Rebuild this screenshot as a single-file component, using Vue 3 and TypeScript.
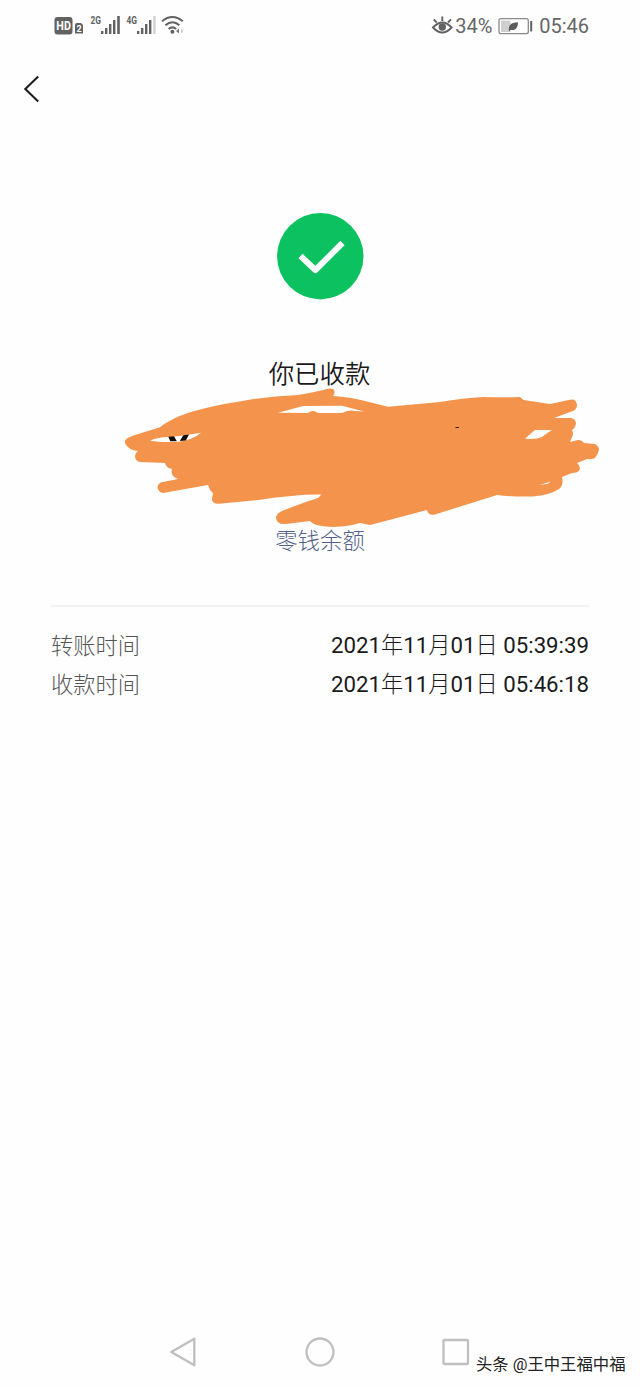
<script setup lang="ts">
interface TimeRow {
  label: string
  value: string
}

interface TextPart {
  text: string
  han: boolean
}

const rows: TimeRow[] = [
  { label: '转账时间', value: '2021年11月01日 05:39:39' },
  { label: '收款时间', value: '2021年11月01日 05:46:18' },
]

// Splits a date so that its Han characters can take a lighter weight than its digits.
function parts(value: string): TextPart[] {
  return value
    .split(/([年月日])/)
    .filter((text) => text.length > 0)
    .map((text) => ({ text, han: /[年月日]/.test(text) }))
}
</script>

<template>
  <div class="screen">
    <header class="status">
      <svg class="status-left" width="140" height="30" viewBox="50 10 140 30">
        <rect x="54.500" y="17" width="18" height="17.500" rx="3" fill="#626262" />
        <text x="63.600" y="30" class="hd" text-anchor="middle" textLength="14.500" lengthAdjust="spacingAndGlyphs">HD</text>
        <path d="M75 25q0-2 2-2h4l2 2v8.500h-8z" fill="#626262" />
        <text x="79" y="31.500" class="sim" text-anchor="middle">2</text>
        <text x="90.500" y="24" class="net" textLength="10.500" lengthAdjust="spacingAndGlyphs">2G</text>
        <g fill="#626262">
          <rect x="101" y="31" width="2.400" height="3" />
          <rect x="105" y="28" width="2.400" height="6" />
          <rect x="109" y="24" width="2.400" height="10" />
          <rect x="113" y="20" width="2.400" height="14" />
          <rect x="117.200" y="16" width="2.600" height="18" />
        </g>
        <text x="126.500" y="24" class="net" textLength="10.500" lengthAdjust="spacingAndGlyphs">4G</text>
        <g fill="#626262">
          <rect x="137" y="31" width="2.400" height="3" />
          <rect x="141" y="28" width="2.400" height="6" />
          <rect x="145" y="24" width="2.400" height="10" />
          <rect x="149" y="20" width="2.400" height="14" />
          <rect x="153.200" y="16" width="2.400" height="18" fill="#d2d2d2" />
        </g>
        <g fill="none" stroke="#626262" stroke-width="2">
          <path d="M162 21.200Q172.400 12.800 182.800 21.200" />
          <path d="M165.400 25.300Q172.400 19.300 179.400 25.300" />
          <path d="M168.600 29Q172.400 25.700 176.200 29" />
        </g>
        <circle cx="172.400" cy="31.700" r="2" fill="#626262" />
        <path d="M179 28.500v5l-3-2.500z" fill="#777" />
        <path d="M181 28.500v5l2.500-2.500z" fill="#ccc" />
      </svg>
      <div class="status-right">
        <svg width="22" height="22" viewBox="431 15 22 22">
          <g fill="none" stroke="#626262" stroke-width="1.900">
            <path d="M433 27.500Q442.300 17.500 451.600 27.500Q442.300 37.500 433 27.500Z" />
            <path d="M442.300 21v-4.500M436.700 22.500l-3-3.200M448 22.500l3-3.200" />
          </g>
          <circle cx="442.300" cy="27" r="3.700" fill="#626262" />
        </svg>
        <span class="percent">34%</span>
        <svg class="battery" width="35" height="18" viewBox="498 16 35 18">
          <rect x="499" y="17.700" width="29.300" height="15" rx="2" fill="none" stroke="#8a8a8a" stroke-width="1.300" />
          <rect x="501" y="19.500" width="9.500" height="11.500" fill="#cfcfcf" />
          <path d="M509 30.500C508 24 511 21.500 518 21.200C518 27 515 30 510.700 28.800Z" fill="#5c5c5c" />
          <rect x="530.200" y="20" width="2" height="10.500" fill="#626262" />
        </svg>
        <span class="clock">05:46</span>
      </div>
    </header>

    <nav class="topbar">
      <svg width="20" height="32" viewBox="20 73 20 32">
        <path d="M38.200 76.500L25.300 89L38.200 101.500" fill="none" stroke="#1c1c1c" stroke-width="2.100" />
      </svg>
    </nav>

    <main class="receipt">
      <svg class="badge" width="88" height="88" viewBox="0 0 88 88">
        <circle cx="44.300" cy="44.200" r="43.200" fill="#0cc160" />
        <path d="M24.500 44L39.400 58L66.500 31" fill="none" stroke="#fff" stroke-width="6" stroke-linejoin="round" />
      </svg>
      <h1>你已收款</h1>
      <svg class="scribble" width="480" height="142" viewBox="122 387 480 142">
        <path
          fill="#f4934b"
          fill-rule="evenodd"
          d="M125 443C124 439 129 437 135 435L160 427.300C180 411 218 405 248 400Q272 396 298 395Q316 392 327 389Q334 387 334.500 391.500Q335 394 333 396Q350 397 365 401L388 406.700L440 402Q463 398 483 397Q500 397.500 520 397L523.500 400L550 404L569 400Q576 398 577 405Q577 409 573 411L554 418L571 418Q576 419 576 424Q575 428 572 430Q574 434 572 437L570 442L578 440Q582 440 584 443L595 444Q599 446 599 450Q598 454 595 458Q590 460 587 459L577 463Q581 466 579.500 470Q578 473 572 473L562 477Q564 485 559 489Q550 495 533 496.500Q514 497 497 495L435 514.500Q428 516 427 510L393 519L370 525L360 523C346 528 316 529 310 521L286 524Q276 525 276 517Q277 513 282 511Q302 503 318 498L321.500 494.500Q298 494 258 500L219 503.700Q212 504 212 499L213 493L210 490L208 485L163 493Q158 492 157.500 487Q159 482 163 482L178 479Q170 476 172 469Q166 468 165 463L140 462Q135 461 135 456Q135 453 138 451Q128 450 125 443Z
             M150 440.700Q159 442.500 177 442Q193 440 201 432.700Q181 436 168 437Q158 437 150 440.700Z
             M278 412.700L303 406L342 405.700L364 411.500L355 411Q350 409.500 342 413L318 413Q313 409 308 413Z
             M525 438.500L535 430L552 430Q547 433 542 437Q535 440 525 438.500Z
             M539 485L551 481.500L548 483.800Z"
        />
        <path d="M168.300 436.800l5.700-.5l2.800 5h-6.500zM183.300 435.300l5.700-.8l-3.200 6l-6 .6z" fill="#160d08" />
        <rect x="455.500" y="427" width="3.500" height="1" fill="#30180a" />
      </svg>
      <a class="balance">零钱余额</a>
    </main>

    <dl class="details">
      <div v-for="row in rows" :key="row.label" class="row">
        <dt>{{ row.label }}</dt>
        <dd><span v-for="(part, i) in parts(row.value)" :key="i" :class="{ han: part.han }">{{ part.text }}</span></dd>
      </div>
    </dl>

    <footer class="navbar">
      <svg width="310" height="34" viewBox="165 1335 310 34">
        <g fill="none" stroke="#bfbfbf" stroke-width="2.300" stroke-linejoin="round">
          <path d="M171.300 1352L194.300 1338.700V1365.300Z" />
          <circle cx="320" cy="1352" r="13.500" />
          <rect x="443.500" y="1340" width="24.500" height="24" rx="1" />
        </g>
      </svg>
      <span class="watermark">头条 @王中王福中福</span>
    </footer>
  </div>
</template>

<style>
body {
  margin: 0;
  background: #fefefe;
}
</style>

<style scoped>
.screen {
  position: relative;
  display: flex;
  flex-direction: column;
  width: 640px;
  height: 1387px;
  overflow: hidden;
  background: #fefefe;
  color: #1a1a1a;
  font-family: Roboto, "Noto Sans CJK SC", sans-serif;
}

svg {
  display: block;
  flex: none;
}

.status {
  display: flex;
  justify-content: space-between;
  align-items: flex-start;
  height: 63px;
  padding: 10px 51px 0 50px;
  box-sizing: border-box;
}

.status-right {
  display: flex;
  align-items: center;
  height: 32px;
  color: #666;
  font-size: 20px;
}

.percent {
  width: 42px;
  padding-left: 2px;
  box-sizing: border-box;
}

.battery {
  margin: 0 6px 0 3px;
}

.hd {
  font: 700 12px Roboto, sans-serif;
  fill: #fff;
}

.sim {
  font: 700 9px Roboto, sans-serif;
  fill: #fff;
}

.net {
  font: 700 10.500px Roboto, sans-serif;
  fill: #626262;
}

.topbar {
  height: 149px;
  padding: 10px 20px 0;
  box-sizing: border-box;
}

.receipt {
  display: flex;
  flex-direction: column;
  align-items: center;
  height: 393px;
}

h1 {
  margin: 54px 1px 0 0;
  font-family: "Noto Sans CJK SC", sans-serif;
  font-size: 25.400px;
  line-height: 36px;
  font-weight: 350;
}

.scribble {
  margin: -3px -84px 0 0;
}

.balance {
  margin-top: -6px;
  font-family: "Noto Sans CJK SC", sans-serif;
  font-size: 22.400px;
  line-height: 32px;
  font-weight: 300;
  color: #52608a;
}

.details {
  margin: 0 51px;
  padding-top: 20px;
  border-top: 2px solid #f1f1f1;
}

.row {
  display: flex;
  justify-content: space-between;
  height: 39px;
  font-size: 22.240px;
  line-height: 37px;
}

dt {
  margin-top: -1px;
  font-family: "Noto Sans CJK SC", sans-serif;
  font-weight: 300;
  color: #555;
}

dd {
  margin: 0;
  white-space: pre;
}

.han {
  font-weight: 300;
}

.navbar {
  display: flex;
  align-items: flex-start;
  height: 52px;
  margin-top: auto;
  padding-left: 165px;
}

.watermark {
  margin: 18px 0 0 1px;
  font-size: 16.350px;
  line-height: 24px;
  color: #222;
  white-space: nowrap;
}
</style>
